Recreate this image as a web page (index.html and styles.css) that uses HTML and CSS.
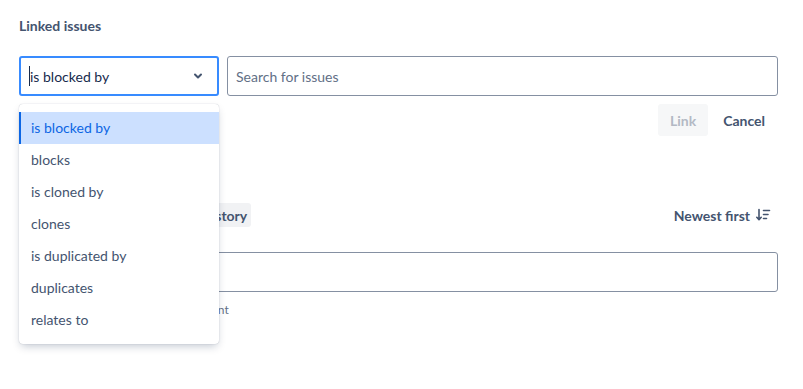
FILE: index.html
```html
<!DOCTYPE html>
<html lang="en">
<head>
 <meta charset="UTF-8">
 <meta name="viewport" content="width=device-width, initial-scale=1.0">
 <title>Linked issues</title>
 <link rel="stylesheet" href="styles.css">
</head>
<body>
 <div class="container">
 <h2 class="title">Linked issues</h2>

 <div class="link-row">
 <div class="select">
 <span class="cursor"></span>
 <span class="select-value">is blocked by</span>
 <svg class="chevron" width="16" height="16" viewBox="0 0 16 16"><path d="M5 6.5l3 3 3-3" fill="none" stroke="#44546f" stroke-width="2" stroke-linecap="round" stroke-linejoin="round"/></svg>
 </div>
 <input type="text" class="search" placeholder="Search for issues">
 </div>

 <div class="actions">
 <button class="btn btn-disabled" disabled>Link</button>
 <button class="btn btn-subtle">Cancel</button>
 </div>

 <div class="activity">
 <div class="tabs-row">
 <div class="tabs">
 <button class="tab tab-active">History</button>
 </div>
 <button class="sort">Newest first
 <svg width="16" height="16" viewBox="0 0 16 16"><path d="M4 2.5v10M1.8 10.3L4 12.6l2.2-2.3M8.5 3.5h6M8.5 7.5h4.5M8.5 11.5h3" fill="none" stroke="#44546f" stroke-width="1.6" stroke-linecap="round" stroke-linejoin="round"/></svg>
 </button>
 </div>

 <div class="comment-row">
 <div class="avatar"></div>
 <div class="comment-box"></div>
 </div>
 <p class="tip">Pro tip: press M to comment</p>
 </div>

 <ul class="menu">
 <li class="menu-item selected">is blocked by</li>
 <li class="menu-item">blocks</li>
 <li class="menu-item">is cloned by</li>
 <li class="menu-item">clones</li>
 <li class="menu-item">is duplicated by</li>
 <li class="menu-item">duplicates</li>
 <li class="menu-item">relates to</li>
 </ul>
 </div>
</body>
</html>
```

FILE: styles.css
```css
html, body {
    min-height: 389px;
 }

body {
    margin: 0;
    background: #ffffff;
    font-family: Lato, "Noto Sans", sans-serif;
    font-size: 14px;
    color: #172b4d;
 }

.container {
    position: relative;
    min-height: 389px;
    padding: 0 25px 0 19px;
 }

.title {
    margin: 0;
    padding-top: 17px;
    height: 56px;
    box-sizing: border-box;
    font-size: 14px;
    font-weight: 700;
    color: #44546f;
 }

.link-row {
    display: flex;
    gap: 8px;
 }

.select {
    position: relative;
    width: 200px;
    height: 40px;
    box-sizing: border-box;
    border: 2px solid #388bff;
    border-radius: 3px;
    display: flex;
    align-items: center;
    padding: 0 10px 0 8px;
 }

.cursor {
    width: 1px;
    height: 20px;
    background: #172b4d;
 }

.select-value {
    flex: 1;
    color: #172b4d;
 }

.chevron {
    margin-right: 1px;
 }

.search {
    flex: 1;
    height: 40px;
    box-sizing: border-box;
    border: 1px solid #8590a2;
    border-radius: 3px;
    padding: 0 8px;
    font-family: inherit;
    font-size: 14px;
    color: #172b4d;
    outline: none;
 }

.search::placeholder {
    color: #626f86;
 }

.actions {
    display: flex;
    justify-content: flex-end;
    gap: 3px;
    margin-top: 8px;
    padding-right: 1px;
 }

.btn {
    height: 32px;
    padding: 0 12px;
    border: none;
    border-radius: 3px;
    font-family: inherit;
    font-size: 14px;
    font-weight: 700;
    background: none;
 }

.btn-disabled {
    background: #f6f7f8;
    color: #b3b9c4;
 }

.btn-subtle {
    color: #44546f;
 }

.activity {
    margin-top: 67px;
 }

.tabs-row {
    display: flex;
    justify-content: space-between;
    align-items: center;
    height: 24px;
 }

.tabs {
    display: flex;
    align-items: center;
    padding-left: 176px;
 }

.tab {
    height: 24px;
    padding: 0 4px 0 6px;
    border: none;
    border-radius: 3px;
    background: #f1f2f4;
    font-family: inherit;
    font-size: 14px;
    font-weight: 700;
    color: #44546f;
 }

.sort {
    display: flex;
    align-items: center;
    gap: 5px;
    height: 24px;
    padding: 0 7px 0 0;
    border: none;
    background: none;
    font-family: inherit;
    font-size: 14px;
    font-weight: 700;
    color: #44546f;
 }

.comment-row {
    display: flex;
    gap: 8px;
    margin-top: 25px;
 }

.avatar {
    width: 32px;
    height: 32px;
    border-radius: 50%;
    background: #dfe1e6;
 }

.comment-box {
    flex: 1;
    height: 40px;
    box-sizing: border-box;
    border: 1px solid #8590a2;
    border-radius: 3px;
 }

.tip {
    margin: 10px 0 0 60px;
    font-size: 12px;
    color: #626f86;
 }

.menu {
    position: absolute;
    left: 19px;
    top: 104px;
    width: 200px;
    margin: 0;
    padding: 8px 0;
    list-style: none;
    background: #ffffff;
    border-radius: 4px;
    box-shadow: 0 4px 8px -2px rgba(9, 30, 66, 0.25), 0 0 1px rgba(9, 30, 66, 0.31);
 }

.menu-item {
    height: 32px;
    line-height: 32px;
    padding-left: 10px;
    border-left: 2px solid transparent;
    color: #44546f;
 }

.menu-item.selected {
    background: #cce0ff;
    border-left-color: #0c66e4;
    color: #0c66e4;
 }
```
